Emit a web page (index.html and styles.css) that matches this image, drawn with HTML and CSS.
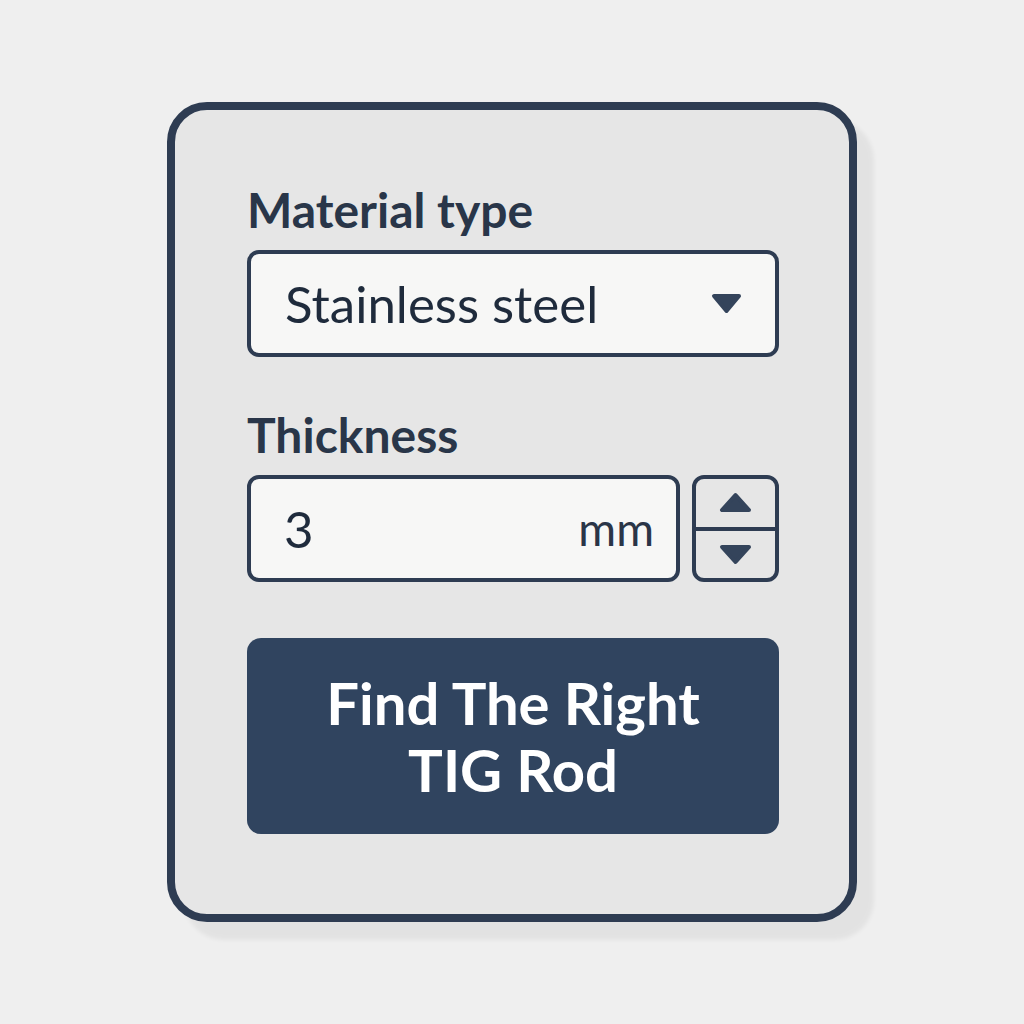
FILE: index.html
```html
<!DOCTYPE html>
<html lang="en">
<head>
    <meta charset="UTF-8">
    <meta name="viewport" content="width=device-width, initial-scale=1.0">
    <title>TIG Rod Finder</title>
    <link rel="stylesheet" href="styles.css">
</head>
<body>
    <div class="card">
        <div class="label">Material type</div>
        <div class="field select">
            <span class="value">Stainless steel</span>
            <svg class="arrow" width="31" height="21" viewBox="0 0 31 21">
                <path d="M3 3 L28 3 L15.5 18 Z" />
            </svg>
        </div>

        <div class="label thickness-label">Thickness</div>
        <div class="input-row">
            <div class="field number">
                <span class="value">3</span>
                <span class="unit">mm</span>
            </div>
            <div class="spinner">
                <div class="spin up">
                    <svg width="33" height="21" viewBox="0 0 33 21">
                        <path d="M3 18 L30 18 L16.5 3 Z" />
                    </svg>
                </div>
                <div class="spin down">
                    <svg width="33" height="21" viewBox="0 0 33 21">
                        <path d="M3 3 L30 3 L16.5 18 Z" />
                    </svg>
                </div>
            </div>
        </div>

        <button class="find">Find The Right<br>TIG Rod</button>
    </div>
</body>
</html>
```

FILE: styles.css
```css
body {
    margin: 0;
    height: 1024px;
    display: flex;
    align-items: center;
    justify-content: center;
    background-color: #efefef;
    font-family: Lato, 'Liberation Sans', sans-serif;
    color: #293649;
}

.card {
    box-sizing: border-box;
    width: 690px;
    height: 820px;
    padding: 74px 70px 0 72px;
    background-color: #e6e6e6;
    border: 8px solid #2e3c52;
    border-radius: 40px;
    box-shadow: 17px 18px 4px rgba(0, 0, 0, 0.05);
    display: flex;
    flex-direction: column;
}

.label {
    font-size: 48px;
    font-weight: 700;
    line-height: 52px;
    margin-bottom: 14px;
}

.thickness-label {
    margin-top: 52px;
}

.field {
    box-sizing: border-box;
    height: 107px;
    background-color: #f7f7f6;
    border: 4px solid #2e3c52;
    border-radius: 12px;
    display: flex;
    align-items: center;
    font-size: 51px;
    color: #1f2b3c;
}

.select {
    padding: 0 33px 0 34px;
    justify-content: space-between;
}

.arrow path,
.spin path {
    fill: #34445b;
    stroke: #34445b;
    stroke-width: 4;
    stroke-linejoin: round;
}

.input-row {
    display: flex;
    gap: 12px;
}

.number {
    flex: 1;
    padding: 0 22px 0 33px;
    justify-content: space-between;
}

.unit {
    font-size: 46px;
    color: #2a3547;
}

.spinner {
    box-sizing: border-box;
    width: 87px;
    height: 107px;
    border: 4px solid #2e3c52;
    border-radius: 12px;
    display: flex;
    flex-direction: column;
}

.spin {
    flex: 1;
    display: flex;
    align-items: center;
    justify-content: center;
}

.spin.up {
    border-bottom: 4px solid #2e3c52;
}

.find {
    margin-top: 56px;
    height: 196px;
    border: none;
    border-radius: 14px;
    background-color: #30445f;
    color: #ffffff;
    font-family: Lato, 'Liberation Sans', sans-serif;
    font-size: 58px;
    font-weight: 700;
    line-height: 67px;
    padding: 0;
}
```
